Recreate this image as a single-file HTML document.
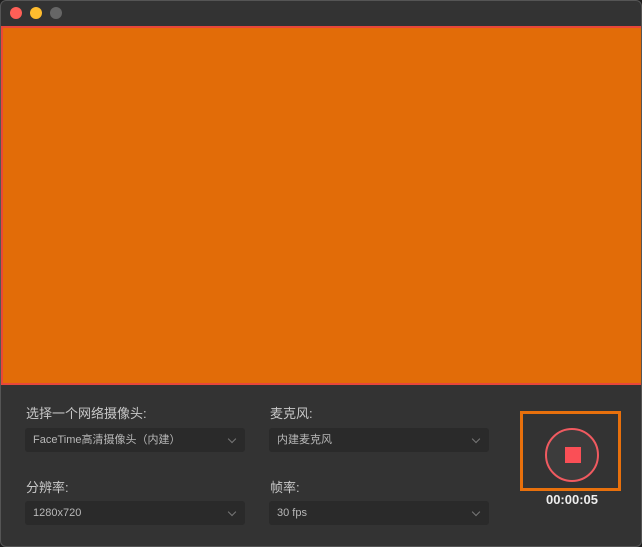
<!DOCTYPE html><html><head><meta charset="utf-8"><style>
body{margin:0;width:642px;height:547px;background:#1e1e1e;overflow:hidden;font-family:"Liberation Sans","Noto Sans CJK SC",sans-serif}
.win{position:absolute;left:0;top:0;width:640px;height:545px;border:1px solid #555;border-radius:6px;background:#333;overflow:hidden}
.dot{position:absolute;top:6px;width:12px;height:12px;border-radius:50%}
.vid{position:absolute;left:0;top:25px;width:638px;height:355px;background:#e26c08;border:2px solid #e8473a}
.lbl{position:absolute;color:#c8c8c8;font-size:13px}
.dd{position:absolute;width:220px;height:24px;background:#2a2a2a;border-radius:3px;color:#b8b8b8;font-size:11px;line-height:24px;box-sizing:border-box;padding-left:8px}
.dd:after{content:"";position:absolute;right:10px;top:8px;width:5px;height:5px;border-right:1px solid #777;border-bottom:1px solid #777;transform:rotate(45deg)}
</style></head><body><div class="win">
<div class="dot" style="left:9px;background:#fe5f57"></div>
<div class="dot" style="left:29px;background:#febc2e"></div>
<div class="dot" style="left:49px;background:#666"></div>
<div class="vid"></div>
<div class="lbl" style="left:25px;top:402px">选择一个网络摄像头:</div>
<div class="lbl" style="left:269px;top:402px">麦克风:</div>
<div class="lbl" style="left:25px;top:476px">分辨率:</div>
<div class="lbl" style="left:269px;top:476px">帧率:</div>
<div class="dd" style="left:24px;top:427px">FaceTime高清摄像头（内建）</div>
<div class="dd" style="left:268px;top:427px">内建麦克风</div>
<div class="dd" style="left:24px;top:500px">1280x720</div>
<div class="dd" style="left:268px;top:500px">30 fps</div>
<div style="position:absolute;left:519px;top:410px;width:95px;height:74px;border:3px solid #e8700c"></div>
<div style="position:absolute;left:544px;top:427px;width:54px;height:54px;border:2px solid #f05a60;border-radius:50%;background:#3c3c3c;box-sizing:border-box"></div>
<div style="position:absolute;left:564px;top:446px;width:16px;height:16px;background:#fa4f56"></div>
<div style="position:absolute;left:519px;top:491px;width:104px;text-align:center;color:#eee;font-size:13px;font-weight:bold">00:00:05</div>
</div></body></html>
